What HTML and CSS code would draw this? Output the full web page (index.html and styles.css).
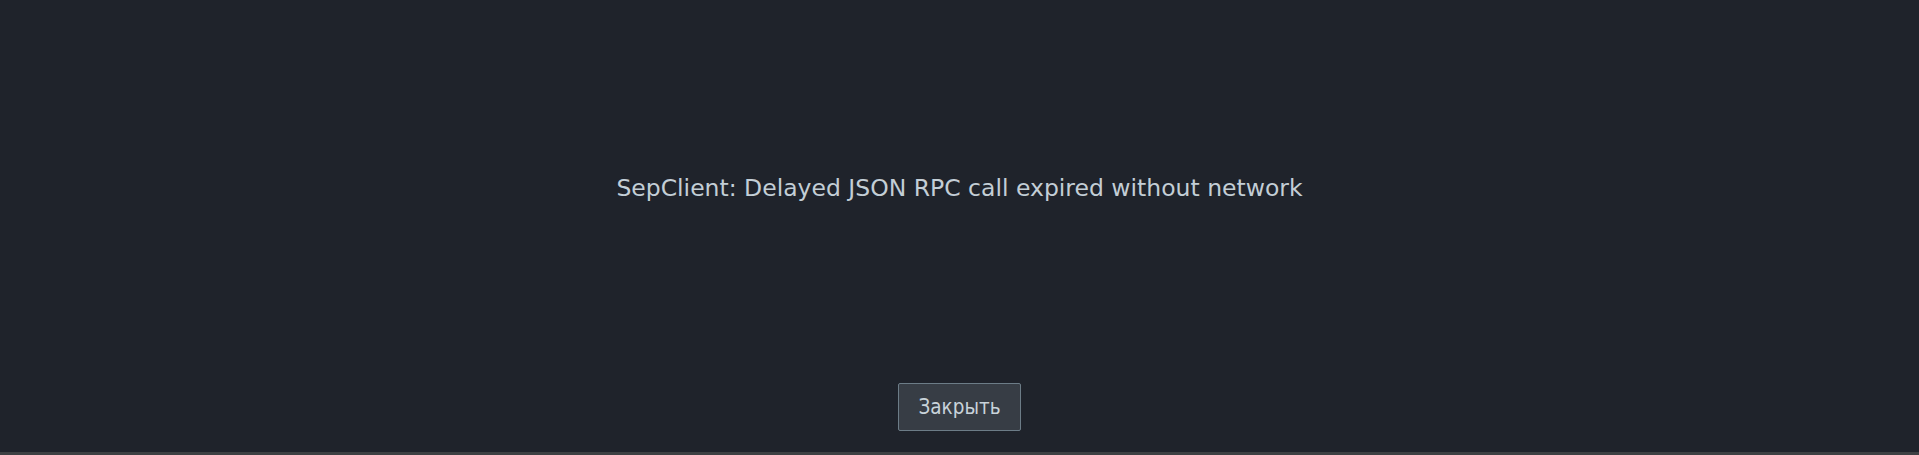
FILE: index.html
```html
<!DOCTYPE html>
<html lang="ru">
<head>
<meta charset="utf-8">
<title>Error</title>
<link rel="stylesheet" href="styles.css">
</head>
<body>
<div class="page">
  <div class="content">
    <div class="message">SepClient: Delayed JSON RPC call expired without network</div>
  </div>
  <div class="actions">
    <button class="btn" type="button">Закрыть</button>
  </div>
  <div class="bottom-bar"></div>
</div>
</body>
</html>
```

FILE: styles.css
```css
html, body {
  margin: 0;
  padding: 0;
  height: 100%;
  background: #1f232b;
}
.page {
  height: 100vh;
  display: flex;
  flex-direction: column;
  font-family: "DejaVu Sans", sans-serif;
}
.content {
  flex: 1;
  display: flex;
  flex-direction: column;
  align-items: center;
  padding-top: 172px;
}
.message {
  color: #c3ced6;
  font-size: 23.5px;
  line-height: 32px;
}
.actions {
  display: flex;
  justify-content: center;
  padding-bottom: 21px;
}
.btn {
  box-sizing: border-box;
  width: 123px;
  height: 48px;
  background: #373d45;
  border: 1px solid #6c7c87;
  border-radius: 2px;
  color: #c8d3da;
  font-family: "DejaVu Sans", sans-serif;
  font-stretch: condensed;
  font-size: 20.5px;
  padding: 0;
}
.bottom-bar {
  height: 3px;
  background: #3d4043;
}
```
